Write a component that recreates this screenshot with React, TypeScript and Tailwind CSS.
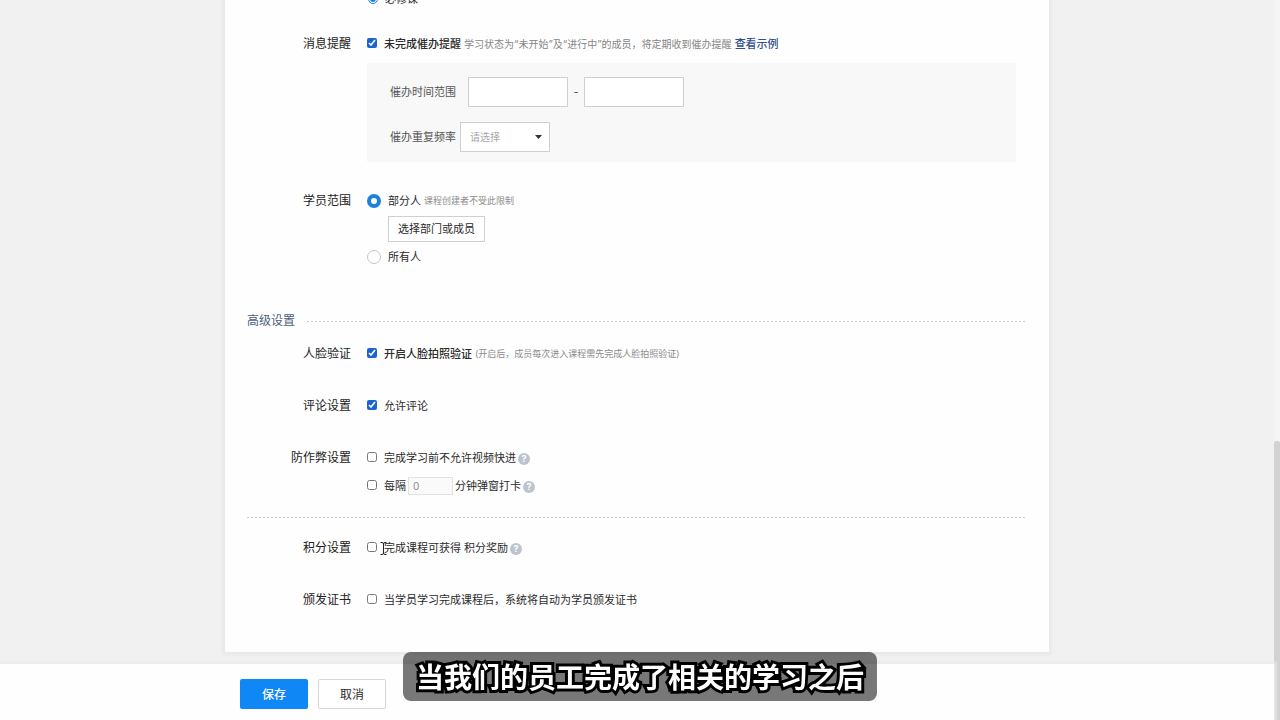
import { useState, type ReactNode } from "react";

const sans = "font-['Inter','Noto_Sans_CJK_SC',sans-serif]";
const dashes = "h-px bg-[repeating-linear-gradient(90deg,#cdcdcd_0_2px,transparent_2px_4px)]";

function Row({ label, className = "", children }: { label?: string; className?: string; children: ReactNode }) {
  return (
    <div role="group" aria-label={label} className={`grid grid-cols-[104px_minmax(0,1fr)] gap-x-4 ${className}`}>
      <div className="text-right text-xs leading-5 text-[#222]">{label}</div>
      <div>{children}</div>
    </div>
  );
}

function Check({ id, label, checked = false, strong = false }: { id: string; label: string; checked?: boolean; strong?: boolean }) {
  return (
    <span className="flex items-center">
      <input id={id} type="checkbox" defaultChecked={checked} className="mb-[2px] mr-[7px] size-[10px] shrink-0 accent-[#1a63d2]" />
      <label htmlFor={id} className={strong ? "font-medium" : ""}>
        {label}
      </label>
    </span>
  );
}

function Radio({ id, name, label, checked, onSelect }: { id: string; name: string; label: string; checked: boolean; onSelect: () => void }) {
  return (
    <span className="flex items-center">
      <input
        id={id}
        type="radio"
        name={name}
        checked={checked}
        onChange={onSelect}
        className="mr-[7px] size-[14px] shrink-0 appearance-none rounded-full border border-[#c4c4c4] bg-white checked:border-4 checked:border-[#1b82dc]"
      />
      <label htmlFor={id}>{label}</label>
    </span>
  );
}

function Help() {
  return (
    <button
      type="button"
      aria-label="帮助"
      className="ml-[2px] mt-[2px] flex size-3 shrink-0 items-center justify-center rounded-full bg-[#bdc4ce] text-[9px] font-bold leading-3 text-white"
    >
      ?
    </button>
  );
}

export default function App() {
  const [scope, setScope] = useState("part");

  return (
    <div className={`flex h-screen overflow-hidden bg-[#f1f1f1] text-[11px] leading-5 text-[#2b2b2b] ${sans}`}>
      <div className="flex min-w-0 flex-1 flex-col">
        <main className="min-h-0 flex-1 overflow-hidden">
          <form className="mx-auto -mt-[11px] max-w-[824px] bg-[#fefefe] pb-[42px] pl-[22px] pr-[23px] shadow-[0_0_2px_3px_#eaeaea]">
            <Row>
              <span className="flex h-5 items-center">
                <input id="required" type="radio" name="kind" defaultChecked className="mx-px mr-[7px] size-[10px] accent-[#1b82dc]" />
                <label htmlFor="required">必修课</label>
              </span>
            </Row>

            <Row label="消息提醒" className="mt-[25px]">
              <div className="flex h-5 items-center gap-[3px] whitespace-nowrap">
                <Check id="remind" label="未完成催办提醒" checked strong />
                <span className="text-[10px] text-[#858585]">学习状态为“未开始”及“进行中”的成员，将定期收到催办提醒</span>
                <a href="#example" className="font-medium text-[#2f4f8a]">
                  查看示例
                </a>
              </div>
              <div className="mr-[10px] mt-[9px] flex flex-col gap-[15px] bg-[#f8f8f8] pb-[10px] pl-[23px] pt-[14px] text-[#555]">
                <div className="flex items-center">
                  <label htmlFor="from" className="mr-3 whitespace-nowrap">
                    催办时间范围
                  </label>
                  <input id="from" type="text" className="h-[30px] w-[100px] border border-[#cfcfcf] bg-white px-2" />
                  <span className="w-4 text-center">-</span>
                  <input id="to" type="text" aria-label="结束时间" className="h-[30px] w-[100px] border border-[#cfcfcf] bg-white px-2" />
                </div>
                <div className="flex items-center">
                  <label htmlFor="freq" className="mr-1 whitespace-nowrap">
                    催办重复频率
                  </label>
                  <span className="relative">
                    <select
                      id="freq"
                      className="block h-[30px] w-[90px] appearance-none border border-[#cfcfcf] bg-white pl-[9px] text-[10px] text-[#a8a8a8]"
                    >
                      <option>请选择</option>
                    </select>
                    <svg viewBox="0 0 7 4" className="pointer-events-none absolute right-2 top-[13px] h-1 w-[7px] fill-[#333]">
                      <path d="M0 0h7L3.5 4z" />
                    </svg>
                  </span>
                </div>
              </div>
            </Row>

            <Row label="学员范围" className="mt-[29px]">
              <div className="flex h-5 items-center gap-[3px]">
                <Radio id="part" name="scope" label="部分人" checked={scope === "part"} onSelect={() => setScope("part")} />
                <span className="text-[9px] text-[#8c8c8c]">课程创建者不受此限制</span>
              </div>
              <button type="button" className="my-[5px] ml-[21px] block h-[26px] w-[97px] whitespace-nowrap border border-[#cfcfcf] bg-white">
                选择部门或成员
              </button>
              <Radio id="all" name="scope" label="所有人" checked={scope === "all"} onSelect={() => setScope("all")} />
            </Row>

            <div className="mt-11 flex items-center gap-3">
              <h2 className="text-xs leading-5 text-[#4f5f7d]">高级设置</h2>
              <div className={`flex-1 ${dashes}`} />
            </div>

            <Row label="人脸验证" className="mt-[13px]">
              <div className="flex h-5 items-center gap-[3px]">
                <Check id="face" label="开启人脸拍照验证" checked strong />
                <span className="text-[9px] text-[#8c8c8c]">(开启后，成员每次进入课程需先完成人脸拍照验证)</span>
              </div>
            </Row>

            <Row label="评论设置" className="mt-8">
              <Check id="comment" label="允许评论" checked />
            </Row>

            <Row label="防作弊设置" className="mt-8">
              <div className="flex h-5 items-center">
                <Check id="seek" label="完成学习前不允许视频快进" />
                <Help />
              </div>
              <div className="mt-2 flex h-5 items-center">
                <Check id="popup" label="每隔" />
                <input
                  type="text"
                  aria-label="弹窗间隔分钟数"
                  defaultValue="0"
                  className="mx-[2px] h-[18px] w-[45px] border border-[#e2e2e2] bg-[#fafafa] px-1 text-[10px] text-[#8c8c8c]"
                />
                <span>分钟弹窗打卡</span>
                <Help />
              </div>
            </Row>

            <div className={`mt-[21px] ${dashes}`} />

            <Row label="积分设置" className="mt-5">
              <div className="relative flex h-5 items-center">
                <Check id="points" label="完成课程可获得 积分奖励" />
                <Help />
                <svg viewBox="0 0 7 13" className="absolute left-[13px] top-1 h-[13px] w-[7px] fill-none stroke-[#222]">
                  <path d="M.5 .5h1.500q1.500 0 1.500 1.500v9q0 1.500-1.500 1.500H.5M6.500 .5H5q-1.500 0-1.500 1.500v9q0 1.500 1.500 1.500h1.500" />
                </svg>
              </div>
            </Row>

            <Row label="颁发证书" className="mt-8">
              <Check id="cert" label="当学员学习完成课程后，系统将自动为学员颁发证书" />
            </Row>
          </form>
        </main>

        <footer className="relative bg-[#fefefe] pb-[11px] pt-[15px] shadow-[0_0_3px_2px_#eaeaea]">
          <div className="mx-auto flex max-w-[824px] gap-[10px] px-[15px] text-xs">
            <button type="button" className="h-[30px] w-[68px] rounded-xs bg-[#0f87f5] pt-px font-medium text-white">
              保存
            </button>
            <button type="button" className="h-[30px] w-[68px] rounded-xs border border-[#d6d6d6] bg-white pt-px">
              取消
            </button>
          </div>
        </footer>
      </div>

      <div className="flex w-[6px] flex-col justify-end bg-[#f4f4f4]">
        <div className="h-[279px] rounded-t-xs bg-[#d2d2d2]" />
      </div>

      <p className="fixed bottom-[19px] left-1/2 -translate-x-1/2 whitespace-nowrap rounded-lg bg-black/53 px-[13px] pt-1 text-[28px] font-bold leading-[45px] text-white [-webkit-text-stroke:6px_#000] [paint-order:stroke_fill]">
        当我们的员工完成了相关的学习之后
      </p>
    </div>
  );
}
